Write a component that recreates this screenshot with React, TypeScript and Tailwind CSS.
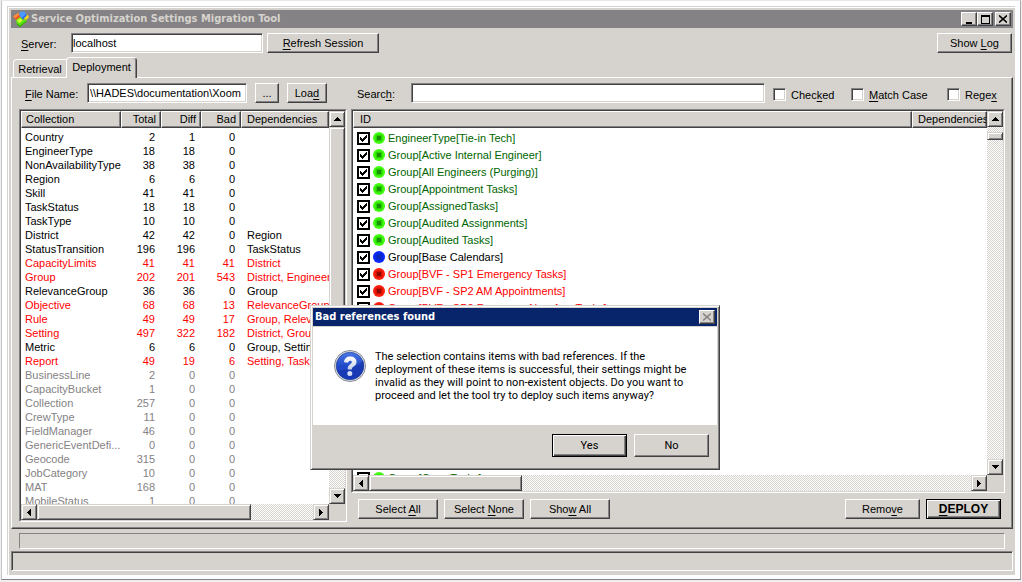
import type { ReactNode } from 'react'
import clsx from 'clsx'

type Tone = 'normal' | 'bad' | 'empty'

interface CollectionRow {
  name: string
  total: number
  diff: number
  bad: number
  deps?: string
  tone?: Tone
}

const collections: CollectionRow[] = [
  { name: 'Country', total: 2, diff: 1, bad: 0 },
  { name: 'EngineerType', total: 18, diff: 18, bad: 0 },
  { name: 'NonAvailabilityType', total: 38, diff: 38, bad: 0 },
  { name: 'Region', total: 6, diff: 6, bad: 0 },
  { name: 'Skill', total: 41, diff: 41, bad: 0 },
  { name: 'TaskStatus', total: 18, diff: 18, bad: 0 },
  { name: 'TaskType', total: 10, diff: 10, bad: 0 },
  { name: 'District', total: 42, diff: 42, bad: 0, deps: 'Region' },
  { name: 'StatusTransition', total: 196, diff: 196, bad: 0, deps: 'TaskStatus' },
  { name: 'CapacityLimits', total: 41, diff: 41, bad: 41, deps: 'District', tone: 'bad' },
  { name: 'Group', total: 202, diff: 201, bad: 543, deps: 'District, EngineerType', tone: 'bad' },
  { name: 'RelevanceGroup', total: 36, diff: 36, bad: 0, deps: 'Group' },
  { name: 'Objective', total: 68, diff: 68, bad: 13, deps: 'RelevanceGroup', tone: 'bad' },
  { name: 'Rule', total: 49, diff: 49, bad: 17, deps: 'Group, RelevanceGroup', tone: 'bad' },
  { name: 'Setting', total: 497, diff: 322, bad: 182, deps: 'District, Group', tone: 'bad' },
  { name: 'Metric', total: 6, diff: 6, bad: 0, deps: 'Group, Setting' },
  { name: 'Report', total: 49, diff: 19, bad: 6, deps: 'Setting, TaskStatus', tone: 'bad' },
  { name: 'BusinessLine', total: 2, diff: 0, bad: 0, tone: 'empty' },
  { name: 'CapacityBucket', total: 1, diff: 0, bad: 0, tone: 'empty' },
  { name: 'Collection', total: 257, diff: 0, bad: 0, tone: 'empty' },
  { name: 'CrewType', total: 11, diff: 0, bad: 0, tone: 'empty' },
  { name: 'FieldManager', total: 46, diff: 0, bad: 0, tone: 'empty' },
  { name: 'GenericEventDefi...', total: 0, diff: 0, bad: 0, tone: 'empty' },
  { name: 'Geocode', total: 315, diff: 0, bad: 0, tone: 'empty' },
  { name: 'JobCategory', total: 10, diff: 0, bad: 0, tone: 'empty' },
  { name: 'MAT', total: 168, diff: 0, bad: 0, tone: 'empty' },
  { name: 'MobileStatus', total: 1, diff: 0, bad: 0, tone: 'empty' },
]

type Status = 'ok' | 'same' | 'bad'

const items: [string, Status][] = [
  ['EngineerType[Tie-in Tech]', 'ok'],
  ['Group[Active Internal Engineer]', 'ok'],
  ['Group[All Engineers (Purging)]', 'ok'],
  ['Group[Appointment Tasks]', 'ok'],
  ['Group[AssignedTasks]', 'ok'],
  ['Group[Audited Assignments]', 'ok'],
  ['Group[Audited Tasks]', 'ok'],
  ['Group[Base Calendars]', 'same'],
  ['Group[BVF - SP1 Emergency Tasks]', 'bad'],
  ['Group[BVF - SP2 AM Appointments]', 'bad'],
  ['Group[BVF - SP3 Response Non-App Tasks]', 'bad'],
  ['Group[BVF - SP4 Tasks]', 'bad'],
  ['Group[BVF - SP5 Tasks]', 'bad'],
  ['Group[BVF - SP6 Tasks]', 'bad'],
  ['Group[BVF - SP7 Tasks]', 'bad'],
  ['Group[BVF - SP8 Tasks]', 'bad'],
  ['Group[BVF - SP9 Tasks]', 'bad'],
  ['Group[Calendars]', 'ok'],
  ['Group[Closed Tasks]', 'ok'],
  ['Group[Contractors]', 'ok'],
  ['Group[Crew Tasks]', 'ok'],
]

const toneClass: Record<Tone, string> = {
  normal: 'text-black',
  bad: 'text-[#ff0000]',
  empty: 'text-[#848284]',
}

const statusText: Record<Status, string> = {
  ok: 'text-[#006500]',
  same: 'text-black',
  bad: 'text-[#ff0000]',
}

const statusColors: Record<Status, [string, string, string]> = {
  ok: ['#42ff10', '#29d300', '#189200'],
  same: ['#0828ff', '#0828d6', '#0828b5'],
  bad: ['#ff2010', '#d61000', '#8c0800'],
}

const raised =
  'border border-t-white border-l-white border-r-[#424142] border-b-[#424142] bg-[#d6d3ce] shadow-[inset_-1px_-1px_#848284]'
const raisedSoft =
  'border border-t-[#d6d3ce] border-l-[#d6d3ce] border-r-[#424142] border-b-[#424142] bg-[#d6d3ce] shadow-[inset_1px_1px_#fff,inset_-1px_-1px_#848284]'
const raisedDefault =
  'border border-black bg-[#d6d3ce] shadow-[inset_1px_1px_#fff,inset_-1px_-1px_#424142,inset_-2px_-2px_#848284]'
const sunken = 'border border-t-[#848284] border-l-[#848284] border-r-white border-b-white'
const sunkenDeep = 'shadow-[inset_1px_1px_#424142,inset_-1px_-1px_#d6d3ce]'
const track = 'bg-[conic-gradient(#fff_25%,#d6d3ce_0_50%,#fff_0_75%,#d6d3ce_0)] bg-[length:2px_2px]'

// Underlines the accelerator key, marked with & in the text
function Accel({ text }: { text: string }) {
  const at = text.indexOf('&')
  if (at < 0) return <>{text}</>
  return (
    <span className="whitespace-pre">
      {text.slice(0, at)}
      <u className="underline-offset-2">{text[at + 1]}</u>
      {text.slice(at + 2)}
    </span>
  )
}

function Button({ text, className }: { text: string; className: string }) {
  return (
    <button type="button" className={clsx(raised, 'h-5 shrink-0 leading-4', className)}>
      <Accel text={text} />
    </button>
  )
}

const arrows = {
  up: 'M0 4h7L3.5 0z',
  down: 'M0 0h7L3.5 4z',
  left: 'M4 0v7L0 3.5z',
  right: 'M0 0v7l4-3.5z',
}

function ArrowButton({ dir }: { dir: keyof typeof arrows }) {
  const vertical = dir === 'up' || dir === 'down'
  return (
    <button type="button" aria-label={`Scroll ${dir}`} className={clsx(raisedSoft, 'flex size-4 shrink-0 items-center justify-center')}>
      <svg width={vertical ? 7 : 4} height={vertical ? 4 : 7} shapeRendering="crispEdges">
        <path d={arrows[dir]} />
      </svg>
    </button>
  )
}

function VScroll({ thumb }: { thumb: string }) {
  return (
    <div className="flex w-4 shrink-0 flex-col">
      <ArrowButton dir="up" />
      <div className={clsx(track, 'min-h-0 flex-1')}>
        <div className={clsx(raisedSoft, thumb)} />
      </div>
      <ArrowButton dir="down" />
    </div>
  )
}

function HScroll({ thumb }: { thumb: string }) {
  return (
    <div className="flex h-4 shrink-0">
      <ArrowButton dir="left" />
      <div className={clsx(track, 'flex-1')}>
        <div className={clsx(raisedSoft, 'h-4', thumb)} />
      </div>
      <ArrowButton dir="right" />
      <div className="w-4 bg-[#d6d3ce]" />
    </div>
  )
}

function ListBox({ vThumb, hThumb, children }: { vThumb: string; hThumb: string; children: ReactNode }) {
  return (
    <div className={clsx(sunken, 'flex min-h-0 flex-1 flex-col')}>
      <div className="flex min-h-0 flex-1 flex-col border border-t-[#424142] border-l-[#424142] border-r-[#d6d3ce] border-b-[#d6d3ce]">
        <div className="flex min-h-0 flex-1">
          <div className="min-w-0 flex-1 overflow-hidden bg-white">{children}</div>
          <VScroll thumb={vThumb} />
        </div>
        <HScroll thumb={hThumb} />
      </div>
    </div>
  )
}

function Th({ children, className }: { children: ReactNode; className: string }) {
  return (
    <th className={clsx(raised, 'h-[17px] overflow-hidden py-0 font-normal leading-[15px] whitespace-nowrap', className)}>
      {children}
    </th>
  )
}

function CollectionTable() {
  return (
    <table className="w-full table-fixed border-separate border-spacing-0">
      <colgroup>
        <col className="w-[100px]" />
        <col className="w-10" />
        <col className="w-10" />
        <col className="w-10" />
        <col />
      </colgroup>
      <thead>
        <tr>
          <Th className="pl-1 text-left">Collection</Th>
          <Th className="pr-1 text-right">Total</Th>
          <Th className="pr-1 text-right">Diff</Th>
          <Th className="pr-1 text-right">Bad</Th>
          <Th className="pl-[5px] text-left">Dependencies</Th>
        </tr>
      </thead>
      <tbody className="before:block before:h-0.5">
        {collections.map((row) => (
          <tr key={row.name} className={clsx('h-3.5 leading-[14px] whitespace-nowrap', toneClass[row.tone ?? 'normal'])}>
            <td className="p-0 pl-1">{row.name}</td>
            <td className="p-0 pr-1.5 text-right">{row.total}</td>
            <td className="p-0 pr-1.5 text-right">{row.diff}</td>
            <td className="p-0 pr-1.5 text-right">{row.bad}</td>
            <td className="overflow-hidden p-0 pl-1.5">{row.deps}</td>
          </tr>
        ))}
      </tbody>
    </table>
  )
}

function StatusDot({ status }: { status: Status }) {
  const [outer, mid, core] = statusColors[status]
  return (
    <svg width="12" height="12" viewBox="0 0 12 12" className="mx-[3px] mt-0.5 shrink-0">
      <circle cx="6" cy="6" r="6" fill={outer} />
      <rect x="2.5" y="2.5" width="7" height="7" rx="1.5" fill={mid} />
      <rect x="4" y="4" width="4" height="4" fill={core} />
    </svg>
  )
}

function ItemTable() {
  return (
    <table className="w-full table-fixed border-separate border-spacing-0">
      <colgroup>
        <col />
        <col className="w-[75px]" />
      </colgroup>
      <thead>
        <tr>
          <Th className="pl-1.5 text-left">ID</Th>
          <Th className="pl-[5px] text-left">Dependencies</Th>
        </tr>
      </thead>
      <tbody className="before:block before:h-0.5">
        {items.map(([name, status]) => (
          <tr key={name} className="h-[17px] whitespace-nowrap">
            <td className="p-0 pl-1">
              <label className={clsx('flex h-[17px] items-start', statusText[status])}>
                <span className="relative mt-0.5 size-[13px] shrink-0">
                  <input type="checkbox" defaultChecked className="block size-[13px] appearance-none border-2 border-black bg-white" />
                  <svg width="13" height="13" className="pointer-events-none absolute inset-0" fill="#000">
                    <path d="M3 5h1v1h1v1h1v-1h1v-1h1v-1h1v-1h1v3h-1v1h-1v1h-1v1h-1v1h-1v-1h-1v-1h-1z" shapeRendering="crispEdges" />
                  </svg>
                </span>
                <StatusDot status={status} />
                <span className="leading-[17px]">{name}</span>
              </label>
            </td>
            <td className="p-0" />
          </tr>
        ))}
      </tbody>
    </table>
  )
}

function Check({ text, className }: { text: string; className: string }) {
  return (
    <label className={clsx('flex shrink-0 items-start gap-[5px] pt-[3px]', className)}>
      <input type="checkbox" className={clsx(sunken, sunkenDeep, 'size-[13px] appearance-none bg-white')} />
      <Accel text={text} />
    </label>
  )
}

function AppIcon() {
  return (
    <svg width="16" height="16" viewBox="0 0 16 16" className="shrink-0">
      <path d="M0 5.500L5 2l4 4.500L4 10z" fill="#f75121" />
      <path d="M0 5.500L5 2l1.500 1.500L2.500 7z" fill="#ff9242" />
      <path d="M6.500 1.500L11 0l3 4.500-4 4-3.500-3.500z" fill="#4a9aff" />
      <path d="M10 8.500l4-4-1-1.500-4 4z" fill="#2169e7" />
      <path d="M11 7.500L14.500 3.500 16 6l-3.500 4z" fill="#ffcf21" />
      <path d="M3 9l4-3 3.500 3L13 7.500l0.500 3L7 16l-3-2.500z" fill="#63e310" />
      <path d="M4 9.500L7 7l2.500 2.500-3 2.500z" fill="#ceff31" />
      <path d="M7 16l-3-2.500 0.500-1 2.500 2 6.500-5v1z" fill="#31aa00" />
    </svg>
  )
}

function QuestionIcon() {
  return (
    <svg width="32" height="32" viewBox="0 0 32 32" className="shrink-0">
      <defs>
        <linearGradient id="ball" x1="0" y1="0" x2="0" y2="1">
          <stop offset="0" stopColor="#4a79e7" />
          <stop offset="0.5" stopColor="#2149c6" />
          <stop offset="1" stopColor="#2149ce" />
        </linearGradient>
        <linearGradient id="mark" x1="0" y1="0" x2="0" y2="1">
          <stop offset="0" stopColor="#ffffff" />
          <stop offset="1" stopColor="#c6cfe7" />
        </linearGradient>
      </defs>
      <circle cx="16" cy="16" r="15.5" fill="#e7e7e7" stroke="#848a94" />
      <circle cx="16" cy="16" r="13.8" fill="url(#ball)" stroke="#10308c" strokeWidth="0.6" />
      <path d="M3 20C11 21 24 17 29 10a14 14 0 0 1-4 16A14 14 0 0 1 3 20z" fill="#10289c" opacity="0.45" />
      <path
        d="M10 12.200C10.300 8.300 12.800 6.500 16.200 6.500c3.700 0 6.300 2 6.300 5.200 0 2.500-1.300 3.800-3.100 5-1.300 0.900-1.500 1.400-1.500 2.800h-4.200c0-2.700 0.600-4 2.500-5.300 1.200-0.800 1.600-1.300 1.600-2.100 0-0.900-0.600-1.400-1.600-1.400-1.200 0-1.800 0.700-2 2.100z"
        fill="url(#mark)"
      />
      <circle cx="15.800" cy="23.500" r="2.500" fill="#d6dff7" />
    </svg>
  )
}

function TitleBar() {
  const button = clsx(raised, 'flex h-3.5 w-4 items-center justify-center')
  return (
    <header className="flex h-[18px] shrink-0 items-center bg-[#848284] px-0.5 text-[#d6d3ce]">
      <AppIcon />
      <h1 className="ml-0.5 flex-1 font-['DejaVu_Sans_Condensed','DejaVu_Sans',sans-serif] font-bold">
        Service Optimization Settings Migration Tool
      </h1>
      <button type="button" aria-label="Minimize" className={button}>
        <svg width="10" height="9" shapeRendering="crispEdges">
          <path d="M2 7h6v2H2z" />
        </svg>
      </button>
      <button type="button" aria-label="Maximize" className={button}>
        <svg width="9" height="9" shapeRendering="crispEdges">
          <path d="M0 0h9v9H0zM1 2v6h7V2z" fillRule="evenodd" />
        </svg>
      </button>
      <button type="button" aria-label="Close" className={clsx(button, 'ml-0.5')}>
        <svg width="8" height="8" stroke="#000" strokeWidth="1.6">
          <path d="M0 0.500l8 7M8 0.500l-8 7" />
        </svg>
      </button>
    </header>
  )
}

function BadReferencesDialog() {
  return (
    <div
      role="dialog"
      aria-labelledby="dialog-title"
      className={clsx(raisedSoft, 'absolute top-[305px] left-[310px] w-[410px] p-0.5 font-[Roboto,sans-serif]')}
    >
      <div className="flex h-[18px] items-center bg-[#08246b] px-0.5 text-white">
        <h2 id="dialog-title" className="flex-1 font-['DejaVu_Sans_Condensed','DejaVu_Sans',sans-serif] font-bold">
          Bad references found
        </h2>
        <button type="button" aria-label="Close" className={clsx(raised, 'flex h-3.5 w-4 items-center justify-center')}>
          <svg width="8" height="8" stroke="#848284" strokeWidth="1.5">
            <path d="M0 0.500l8 7M8 0.500l-8 7" />
          </svg>
        </button>
      </div>
      <div className="mt-px flex h-[98px] items-start bg-white pt-[23px] pl-[21px]">
        <QuestionIcon />
        <p className="ml-[9px] leading-[13px] whitespace-nowrap">
          The selection contains items with bad references. If the
          <br />
          deployment of these items is successful, their settings might be
          <br />
          invalid as they will point to non-existent objects. Do you want to
          <br />
          proceed and let the tool try to deploy such items anyway?
        </p>
      </div>
      <div className="flex justify-end gap-[7px] pt-[9px] pr-2 pb-2.5">
        <button type="button" className={clsx(raisedDefault, 'h-[23px] w-[75px]')}>
          Yes
        </button>
        <button type="button" className={clsx(raised, 'h-[23px] w-[75px]')}>
          No
        </button>
      </div>
    </div>
  )
}

export default function App() {
  return (
    <div className="relative h-screen bg-[#efefef] px-px pb-0.5 font-['Liberation_Sans',Arial,sans-serif] text-[11px] leading-[14px] text-black">
      <div className="flex h-full flex-col border border-t-[#e7e7e7] border-r-[#a5a5a5] border-b-[#848284] border-l-[#c6c6c6] bg-white p-[5px] pb-1">
        <div className="flex min-h-0 flex-1 flex-col border-t border-l border-[#d6d3ce]">
          <div className="flex min-h-0 flex-1 flex-col border-t border-l border-white bg-[#d6d3ce] p-0.5">
            <TitleBar />

            <div className="flex shrink-0 items-center pt-[5px] pr-px">
              <label htmlFor="server" className="w-[60px] pt-0.5 pl-2.5">
                <Accel text="&Server:" />
              </label>
              <input id="server" defaultValue="localhost" className={clsx(sunken, sunkenDeep, 'h-5 w-48 bg-white px-px')} />
              <Button text="&Refresh Session" className="ml-1 w-28" />
              <Button text="Show &Log" className="ml-auto w-[75px]" />
            </div>

            <div role="tablist" className="mt-1 flex shrink-0 items-end pl-0.5">
              <button type="button" role="tab" aria-selected="false" className="h-[18px] w-[53px] rounded-tl-sm border-t border-l border-white">
                Retrieval
              </button>
              <button
                type="button"
                role="tab"
                aria-selected="true"
                className="relative -mb-px h-[21px] w-[71px] rounded-t-sm border border-t-white border-r-[#424142] border-b-0 border-l-white bg-[#d6d3ce] pb-0.5 shadow-[inset_-1px_0_#848284]"
              >
                Deployment
              </button>
            </div>

            <div className="flex min-h-0 flex-1 gap-1 border border-t-white border-r-[#424142] border-b-[#424142] border-l-white px-[7px] pt-[5px] pb-1.5 shadow-[inset_-1px_-1px_#848284]">
              <section className="flex w-[328px] shrink-0 flex-col">
                <div className="mb-1.5 flex items-center">
                  <label htmlFor="file" className="w-[68px] pt-0.5 pl-1.5 whitespace-nowrap">
                    <Accel text="&File Name:" />
                  </label>
                  <input id="file" defaultValue={'\\\\HADES\\documentation\\Xoom'} className={clsx(sunken, sunkenDeep, 'h-5 w-40 bg-white px-0.5')} />
                  <Button text="..." className="ml-2 w-6" />
                  <Button text="Loa&d" className="ml-2 w-10" />
                </div>
                <ListBox vThumb="h-[260px]" hThumb="w-[214px]">
                  <CollectionTable />
                </ListBox>
              </section>

              <section className="flex min-w-0 flex-1 flex-col">
                <div className="mb-1.5 flex items-center">
                  <label htmlFor="search" className="w-[60px] pt-0.5 pl-1.5">
                    <Accel text="Searc&h:" />
                  </label>
                  <input id="search" className={clsx(sunken, sunkenDeep, 'mr-2 h-5 min-w-0 flex-1 bg-white px-0.5')} />
                  <Check text="Chec&ked" className="w-[78px]" />
                  <Check text="&Match Case" className="w-24" />
                  <Check text="Rege&x" className="w-[58px]" />
                </div>
                <ListBox vThumb="mt-[5px] h-2" hThumb="w-[153px]">
                  <ItemTable />
                </ListBox>
                <div className="mt-1.5 mb-[3px] flex shrink-0 gap-1.5 pr-1 pl-[7px]">
                  <Button text="Select &All" className="w-20" />
                  <Button text="Select &None" className="w-20" />
                  <Button text="Sho&w All" className="w-20" />
                  <Button text="Remo&ve" className="ml-auto w-[75px]" />
                  <button type="button" className={clsx(raisedDefault, 'h-5 w-[75px] text-xs leading-4 font-bold')}>
                    <Accel text="&DEPLOY" />
                  </button>
                </div>
              </section>
            </div>

            <div className={clsx(sunken, 'mx-2 mt-1 h-4 shrink-0')} />
            <div className={clsx(sunken, sunkenDeep, 'mt-0.5 mb-0.5 h-5 shrink-0')} />
          </div>
        </div>
      </div>
      <BadReferencesDialog />
    </div>
  )
}
